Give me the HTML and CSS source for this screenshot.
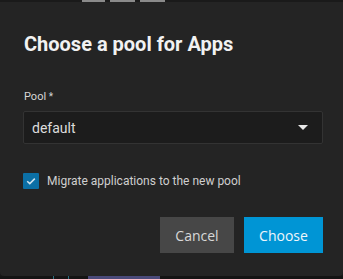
FILE: index.html
```html
<!DOCTYPE html>
<html>
<head>
<meta charset="utf-8">
<link rel="stylesheet" href="styles.css">
</head>
<body>
<div class="topstrip">
  <span class="tab t1"></span><span class="tab t2"></span><span class="tab t3"></span>
</div>
<div class="dialog">
  <h1 class="title">Choose a pool for Apps</h1>
  <div class="field">
    <label class="label">Pool <span class="req">*</span></label>
    <div class="select">
      <span class="value">default</span>
      <span class="caret"></span>
    </div>
  </div>
  <div class="check-row">
    <span class="checkbox">
      <svg width="16" height="16" viewBox="0 0 16 16"><path d="M4.2 8.2 L6.8 10.6 L11.8 5.6" fill="none" stroke="#cfe3ef" stroke-width="1.5"/></svg>
    </span>
    <span class="check-label">Migrate applications to the new pool</span>
  </div>
  <div class="actions">
    <button class="btn cancel">Cancel</button>
    <button class="btn choose">Choose</button>
  </div>
</div>
<div class="bottomstrip">
  <span class="tick k1"></span><span class="tick k2"></span><span class="chip"></span>
</div>
</body>
</html>
```
FILE: styles.css
```css
html, body { margin: 0; padding: 0; }
body {
  width: 343px;
  height: 279px;
  background: #181818;
  font-family: Roboto, "Noto Sans", sans-serif;
  overflow: hidden;
}
.topstrip {
  height: 2px;
  display: flex;
  background: #1a1a1a;
}
.tab { height: 2px; background: #8a8a8a; }
.t1 { margin-left: 82px; width: 23px; }
.t2 { margin-left: 5px; width: 25px; }
.t3 { margin-left: 5px; width: 25px; }
.dialog {
  height: 274px;
  box-sizing: border-box;
  background: #242424;
  border-radius: 0 0 4px 4px;
  padding: 30px 20px 0 23px;
  display: flex;
  flex-direction: column;
}
.title {
  margin: 0 0 0 1px;
  font-size: 20px;
  font-weight: 700;
  line-height: 24px;
  color: #f2f2f2;
  letter-spacing: 0;
}
.field { margin-top: 34px; }
.label {
  display: block;
  font-size: 11px;
  line-height: 13px;
  color: #d6d6d6;
  margin-left: 1px;
}
.req { font-size: 10px; }
.select {
  margin-top: 8px;
  height: 33px;
  box-sizing: border-box;
  border: 1px solid #333;
  border-radius: 2px;
  background: #1c1c1c;
  display: flex;
  align-items: center;
  justify-content: space-between;
  padding: 0 14px 0 8px;
}
.value { font-size: 14px; color: #dcdcdc; }
.caret {
  width: 0; height: 0;
  border-left: 5px solid transparent;
  border-right: 5px solid transparent;
  border-top: 5px solid #e8e8e8;
}
.check-row {
  margin-top: 29px;
  display: flex;
  align-items: center;
}
.checkbox {
  width: 16px; height: 16px;
  background: #0b6fa5;
  border-radius: 1px;
  display: flex;
}
.check-label {
  margin-left: 8px;
  font-size: 12px;
  color: #cfcfcf;
}
.actions {
  margin-top: 28px;
  display: flex;
  justify-content: flex-end;
  gap: 10px;
}
.btn {
  height: 36px;
  border: 0;
  border-radius: 0;
  font-family: "Open Sans", Roboto, sans-serif;
  font-size: 14px;
  padding: 0;
}
.cancel { width: 74px; background: #474747; color: #d8d8d8; }
.choose { width: 79px; background: #0095d5; color: #eef6fb; }
.bottomstrip {
  height: 3px;
  display: flex;
  background: #141414;
}
.tick { width: 1px; height: 3px; background: #2b6e80; }
.k1 { margin-left: 53px; }
.k2 { margin-left: 14px; }
.chip { margin-left: 19px; width: 72px; height: 3px; background: #4a4a7a; }
```
